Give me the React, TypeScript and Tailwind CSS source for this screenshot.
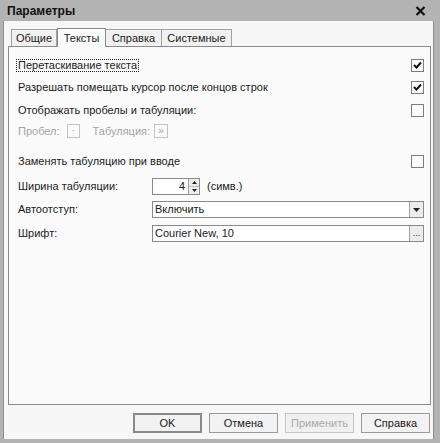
import React from "react";

const Check = ({ checked }: { checked?: boolean }) => (
  <div className="w-[13px] h-[13px] border border-[#7d7d7d] bg-[#fdfdfd] flex items-center justify-center">
    {checked && (
      <svg width="9" height="8" viewBox="0 0 9 8">
        <path d="M1 4 L3.5 6.5 L8 1.5" stroke="#111" strokeWidth="2" fill="none" />
      </svg>
    )}
  </div>
);

const Btn = ({ children, disabled, def }: { children: React.ReactNode; disabled?: boolean; def?: boolean }) => (
  <div
    className={`w-[69px] h-[20px] flex items-center justify-center text-[11px] ${
      def ? "border-2 border-[#8a8a8a]" : "border border-[#9a9a9a]"
    } ${disabled ? "text-[#a9a9a9] bg-[#f0f0f0] border-[#c4c4c4]" : "text-[#1a1a1a] bg-[#f2f2f2]"}`}
  >
    {children}
  </div>
);

export default function App() {
  return (
    <div
      className="w-[440px] h-[443px] bg-[#b3b3b3] flex flex-col text-[#1a1a1a]"
      style={{ fontFamily: '"Liberation Sans", Arial, sans-serif' }}
    >
      <div className="h-[21px] flex items-center justify-between pl-[7px] pr-[14px] shrink-0">
        <span className="text-[12px] font-bold text-[#111]">Параметры</span>
        <svg width="11" height="10" viewBox="0 0 11 10">
          <path d="M1.5 1 L9.5 9 M9.5 1 L1.5 9" stroke="#111" strokeWidth="2.2" />
        </svg>
      </div>
      <div className="flex-1 ml-[3px] mr-[6px] mb-[4px] bg-[#f7f7f7] border-l border-r border-[#8f8f8f] flex flex-col">
        <div className="flex items-end h-[25px] pl-[7px] text-[11px]">
          <div className="w-[46px] h-[17px] border border-b-0 border-[#a0a0a0] bg-[#f1f1f1] flex items-center justify-center">Общие</div>
          <div className="w-[49px] h-[19px] border border-b-0 border-[#8a8a8a] bg-[#fbfbfb] flex items-center justify-center -mb-px relative z-10">Тексты</div>
          <div className="w-[56px] h-[17px] border border-b-0 border-l-0 border-[#a0a0a0] bg-[#f1f1f1] flex items-center justify-center">Справка</div>
          <div className="w-[70px] h-[17px] border border-b-0 border-l-0 border-[#a0a0a0] bg-[#f1f1f1] flex items-center justify-center">Системные</div>
        </div>
        <div className="ml-[4px] mr-[2px] h-[359px] border border-[#8a8a8a] bg-[#fbfbfb] flex flex-col pl-[9px] pr-[6px] pt-[8px] text-[11px]">
          <div className="h-[20px] flex items-center justify-between">
            <span className="border border-dotted border-[#222] px-[1px] leading-[11px] -ml-[2px]">Перетаскивание текста</span>
            <Check checked />
          </div>
          <div className="h-[20px] mt-[2px] flex items-center justify-between">
            <span>Разрешать помещать курсор после концов строк</span>
            <Check checked />
          </div>
          <div className="h-[20px] mt-[3px] flex items-center justify-between">
            <span>Отображать пробелы и табуляции:</span>
            <Check />
          </div>
          <div className="h-[20px] mt-[1px] flex items-center text-[#a3a3a3]">
            <span>Пробел:</span>
            <div className="ml-[7px] w-[13px] h-[14px] border border-[#c2c2c2] flex items-center justify-center text-[10px] leading-none">·</div>
            <span className="ml-[13px]">Табуляция:</span>
            <div className="ml-[4px] w-[14px] h-[14px] border border-[#c2c2c2] flex items-center justify-center text-[10px] leading-none">»</div>
          </div>
          <div className="h-[20px] mt-[10px] flex items-center justify-between">
            <span>Заменять табуляцию при вводе</span>
            <Check />
          </div>
          <div className="h-[17px] mt-[7px] flex items-center">
            <span className="w-[134px]">Ширина табуляции:</span>
            <div className="w-[48px] h-[17px] border border-[#8a8a8a] bg-white flex">
              <div className="flex-1 text-right pr-[3px] leading-[15px]">4</div>
              <div className="w-[11px] border-l border-[#a0a0a0] bg-[#ececec] flex flex-col">
                <div className="flex-1 flex items-center justify-center border-b border-[#c0c0c0]">
                  <svg width="5" height="3" viewBox="0 0 5 3"><path d="M0 3 L2.5 0 L5 3Z" fill="#222" /></svg>
                </div>
                <div className="flex-1 flex items-center justify-center">
                  <svg width="5" height="3" viewBox="0 0 5 3"><path d="M0 0 L2.5 3 L5 0Z" fill="#222" /></svg>
                </div>
              </div>
            </div>
            <span className="ml-[7px]">(симв.)</span>
          </div>
          <div className="h-[17px] mt-[6px] flex items-center">
            <span className="w-[134px]">Автоотступ:</span>
            <div className="flex-1 h-[17px] border border-[#8a8a8a] bg-white flex">
              <div className="flex-1 pl-[2px] leading-[15px]">Включить</div>
              <div className="w-[14px] border-l border-[#a0a0a0] bg-[#ececec] flex items-center justify-center">
                <svg width="7" height="4" viewBox="0 0 7 4"><path d="M0 0 L3.5 4 L7 0Z" fill="#222" /></svg>
              </div>
            </div>
          </div>
          <div className="h-[17px] mt-[7px] flex items-center">
            <span className="w-[134px]">Шрифт:</span>
            <div className="flex-1 h-[17px] border border-[#8a8a8a] bg-white flex">
              <div className="flex-1 pl-[2px] leading-[15px]">Courier New, 10</div>
              <div className="w-[14px] border-l border-[#a0a0a0] bg-[#ececec] flex items-end justify-center pb-[3px] text-[9px] leading-none">...</div>
            </div>
          </div>
        </div>
        <div className="flex justify-end gap-[7px] pr-[3px] mt-[8px]">
          <Btn def>OK</Btn>
          <Btn>Отмена</Btn>
          <Btn disabled>Применить</Btn>
          <Btn>Справка</Btn>
        </div>
      </div>
    </div>
  );
}
